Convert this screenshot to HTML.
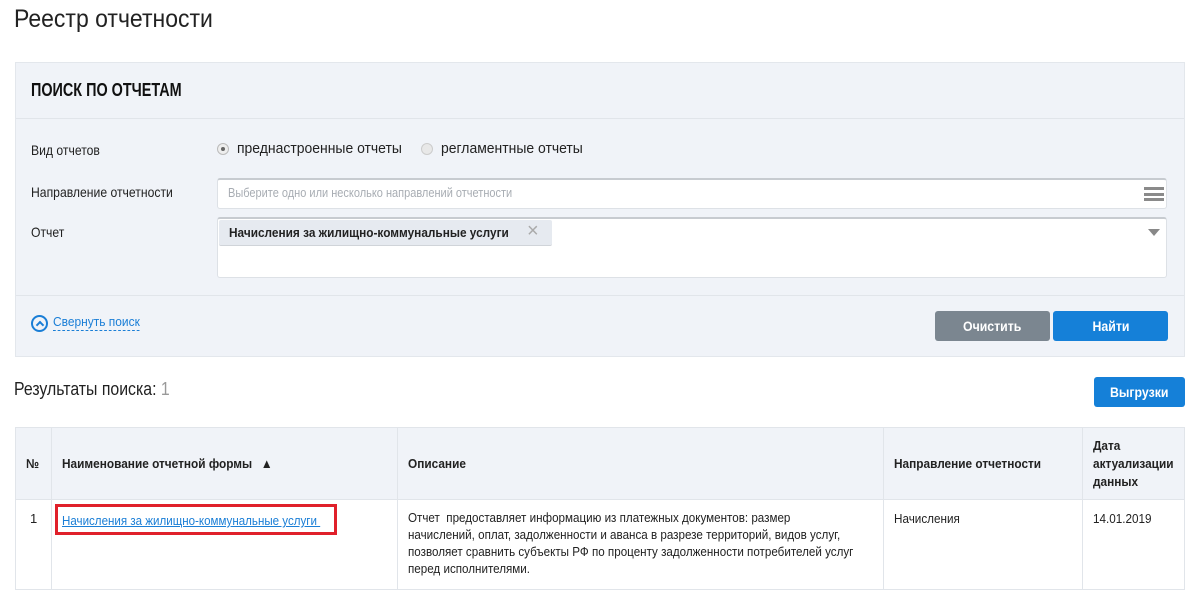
<!DOCTYPE html>
<html><head><meta charset="utf-8"><style>
*{box-sizing:border-box;margin:0;padding:0}
body{width:1196px;height:600px;background:#fff;font-family:"Liberation Sans",sans-serif;color:#222;position:relative;overflow:hidden;font-size:14px}
.a{position:absolute;white-space:nowrap;transform-origin:0 50%}
.s{display:inline-block;white-space:nowrap;transform-origin:0 50%}
.panel{position:absolute;left:15px;top:62px;width:1170px;height:295px;background:#f0f3f8;border:1px solid #e3e7ec}
.hl{position:absolute;left:0;right:0;height:1px;background:#e1e5ea}
.inp{position:absolute;background:#fff;border:1px solid #dde1e6;border-top:2px solid #c7cbd0;border-radius:3px}
.btn{position:absolute;color:#fff;font-weight:bold;font-size:14px;text-align:center;border-radius:3px}
table{position:absolute;left:15px;top:427px;width:1170px;border-collapse:collapse;font-size:13px;table-layout:fixed}
td,th{border:1px solid #e1e5ea;vertical-align:top;text-align:left;overflow:visible}
th{background:#f0f3f8;font-weight:bold;vertical-align:middle;height:72px;padding:0 10px}
td{padding:10px 10px 10px;line-height:17px;height:90px}
</style></head><body>
<div class="a" style="left:14px;top:5px;font-size:25px;color:#222;transform:scaleX(0.92)">Реестр отчетности</div>
<div class="panel">
 <div class="a" style="left:15px;top:17px;font-size:18px;font-weight:bold;color:#111;transform:scaleX(0.8)">ПОИСК ПО ОТЧЕТАМ</div>
 <div class="hl" style="top:55px"></div>
 <div class="a" style="left:15px;top:79px;font-size:14px;transform:scaleX(0.87)">Вид отчетов</div>
 <div class="a" style="left:201px;top:80px;width:12px;height:12px;border-radius:50%;border:1px solid #bbb;background:#eee"><div style="position:absolute;left:3px;top:3px;width:4px;height:4px;border-radius:50%;background:#666"></div></div>
 <div class="a" style="left:221px;top:77px;font-size:15px;transform:scaleX(0.93)">преднастроенные отчеты</div>
 <div class="a" style="left:405px;top:80px;width:12px;height:12px;border-radius:50%;border:1px solid #ccc;background:#e8e8e8"></div>
 <div class="a" style="left:425px;top:77px;font-size:15px;transform:scaleX(0.93)">регламентные отчеты</div>
 <div class="a" style="left:15px;top:121px;font-size:14px;transform:scaleX(0.87)">Направление отчетности</div>
 <div class="inp" style="left:201px;top:115px;width:950px;height:31px">
  <div class="a" style="left:10px;top:6px;font-size:12.5px;color:#a8adb3;transform:scaleX(0.88)">Выберите одно или несколько направлений отчетности</div>
  <div class="a" style="right:2px;top:7px;width:20px;height:14px;border-top:3px solid #8a8a8a;border-bottom:3px solid #8a8a8a"><div style="margin-top:2.5px;height:3px;background:#8a8a8a"></div></div>
 </div>
 <div class="a" style="left:15px;top:161px;font-size:14px;transform:scaleX(0.87)">Отчет</div>
 <div class="inp" style="left:201px;top:154px;width:950px;height:61px">
  <div class="a" style="left:1px;top:1px;width:333px;height:26px;background:#e6eaf0;border-bottom:1px solid #d0d4d9;border-radius:2px">
   <div class="a" style="left:10px;top:5px;font-size:13px;font-weight:bold;color:#222;transform:scaleX(0.91)">Начисления за жилищно-коммунальные услуги</div>
   <div class="a" style="left:308px;top:0px;font-size:20px;color:#aaa">×</div>
  </div>
  <div class="a" style="right:6px;top:10px;width:0;height:0;border-left:6px solid transparent;border-right:6px solid transparent;border-top:7px solid #888"></div>
 </div>
 <div class="hl" style="top:232px"></div>
 <div class="a" style="left:15px;top:252px;width:17px;height:17px;border:2px solid #1a7ed6;border-radius:50%"><div style="position:absolute;left:4px;top:5px;width:6px;height:6px;border-left:2px solid #1a7ed6;border-top:2px solid #1a7ed6;transform:rotate(45deg)"></div></div>
 <div class="a" style="left:37px;top:250px;font-size:13px;color:#1a7ed6;border-bottom:1px dashed #1a7ed6;line-height:17px;transform:scaleX(0.92)">Свернуть поиск</div>
 <div class="btn" style="left:919px;top:248px;width:115px;height:30px;line-height:30px;background:#7b8690"><span class="s" style="transform:scaleX(0.88);transform-origin:50% 50%">Очистить</span></div>
 <div class="btn" style="left:1037px;top:248px;width:115px;height:30px;line-height:30px;background:#1580d8"><span class="s" style="transform:scaleX(0.88);transform-origin:50% 50%">Найти</span></div>
</div>
<div class="a" style="left:14px;top:379px;font-size:18px;color:#222;transform:scaleX(0.88)">Результаты поиска: <span style="color:#999">1</span></div>
<div class="btn" style="left:1094px;top:377px;width:91px;height:30px;line-height:30px;background:#1580d8"><span class="s" style="transform:scaleX(0.88);transform-origin:50% 50%">Выгрузки</span></div>
<table>
<colgroup><col style="width:36px"><col style="width:346px"><col style="width:486px"><col style="width:199px"><col></colgroup>
<tr><th><span class="s" style="transform:scaleX(0.9)">№</span></th><th><span class="s" style="transform:scaleX(0.91)">Наименование отчетной формы <span style="font-size:13px;margin-left:6px">▲</span></span></th><th><span class="s" style="transform:scaleX(0.91)">Описание</span></th><th><span class="s" style="transform:scaleX(0.91)">Направление отчетности</span></th><th style="line-height:18px"><span class="s" style="transform:scaleX(0.91)">Дата<br>актуализации<br>данных</span></th></tr>
<tr><td style="padding-left:14px">1</td><td style="padding:4px 3px"><div style="display:block;width:282px;height:31px;border:3px solid #e0202a;padding:5px 0 0 4px;color:#1a7ed6;white-space:nowrap"><span class="s" style="transform:scaleX(0.89);text-decoration:underline">Начисления за жилищно-коммунальные услуги&nbsp;</span></div></td><td style="font-size:12.5px"><span class="s" style="transform:scaleX(0.93)">Отчет&nbsp; предоставляет информацию из платежных документов: размер<br>начислений, оплат, задолженности и аванса в разрезе территорий, видов услуг,<br>позволяет сравнить субъекты РФ по проценту задолженности потребителей услуг<br>перед исполнителями.</span></td><td><span class="s" style="transform:scaleX(0.9)">Начисления</span></td><td><span class="s" style="transform:scaleX(0.9)">14.01.2019</span></td></tr>
</table>
</body></html>
